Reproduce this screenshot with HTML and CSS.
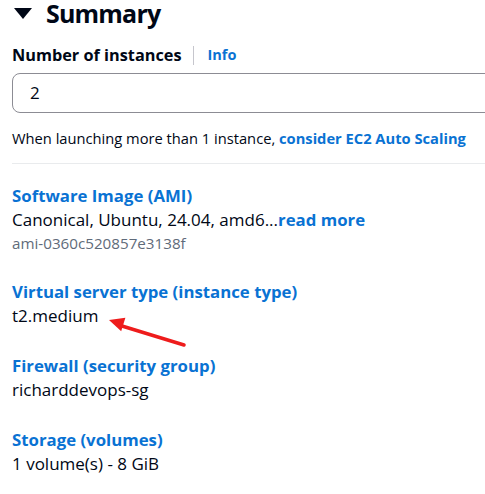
FILE: index.html
```html
<!DOCTYPE html>
<html lang="en">
<head>
  <meta charset="UTF-8">
  <title>Summary</title>
  <link rel="stylesheet" href="styles.css">
</head>
<body>
  <div class="summary">
    <!-- Header -->
    <div class="summary-header">
      <svg class="caret" width="18" height="11" viewBox="0 0 18 11">
        <polygon points="0,0 18,0 9,11" fill="#000716"/>
      </svg>
      <h2>Summary</h2>
    </div>

    <!-- Number of instances -->
    <div class="field-label">
      <span>Number of instances</span>
      <span class="info-sep"></span>
      <a class="info">Info</a>
    </div>
    <div class="input-box">2</div>
    <p class="hint">When launching more than 1 instance, <a class="link">consider EC2 Auto Scaling</a></p>

    <hr class="divider">

    <!-- Details -->
    <div class="detail">
      <a class="detail-label">Software Image (AMI)</a>
      <div class="detail-value">Canonical, Ubuntu, 24.04, amd6...<a class="link">read more</a></div>
      <div class="detail-sub">ami-0360c520857e3138f</div>
    </div>

    <div class="detail">
      <a class="detail-label">Virtual server type (instance type)</a>
      <div class="detail-value arrow-row">
        t2.medium
        <svg class="arrow" width="90" height="34" viewBox="0 0 90 34">
          <line x1="76" y1="28" x2="14" y2="9" stroke="#ee1c1c" stroke-width="3.5" stroke-linecap="round"/>
          <polygon points="1,3 17.4,0.8 13.2,14.2" fill="#ee1c1c"/>
        </svg>
      </div>
    </div>

    <div class="detail">
      <a class="detail-label">Firewall (security group)</a>
      <div class="detail-value">richarddevops-sg</div>
    </div>

    <div class="detail">
      <a class="detail-label">Storage (volumes)</a>
      <div class="detail-value">1 volume(s) - 8 GiB</div>
    </div>
  </div>
</body>
</html>
```

FILE: styles.css
```css
/* General */
body {
  margin: 0;
  font-family: 'Open Sans', 'Noto Sans', sans-serif;
  color: #000716;
  background: #fff;
  overflow: hidden;
}

.summary {
  padding-left: 12px;
}

a {
  color: #0972d3;
  font-weight: 700;
  text-decoration: none;
}

/* Header */
.summary-header {
  display: flex;
  align-items: center;
  height: 26px;
}

.caret {
  margin: 1px 14px 0 2px;
}

.summary-header h2 {
  margin: 0;
  font-size: 25px;
  line-height: 26px;
  letter-spacing: -0.8px;
  font-weight: 700;
}

/* Number of instances */
.field-label {
  display: flex;
  align-items: center;
  margin-top: 18px;
  font-size: 16.3px;
  font-weight: 700;
  line-height: 22px;
}

.info-sep {
  width: 1px;
  height: 19px;
  background: #c6c6cd;
  margin: 0 14px 0 11px;
}

.info {
  font-size: 14.5px;
}

.input-box {
  margin-top: 7px;
  height: 38px;
  margin-right: -20px;
  border: 1px solid #8c8c94;
  border-radius: 8px;
  padding-left: 17px;
  font-size: 17px;
  line-height: 38px;
}

.hint {
  margin: 15px 0 0;
  font-size: 14.7px;
  line-height: 20px;
}

.divider {
  border: none;
  border-top: 1px solid #e9ebed;
  margin: 15px 0 0;
}

/* Details */
.detail {
  margin-top: 26px;
}

.divider + .detail {
  margin-top: 20px;
}

.detail-label {
  display: block;
  font-size: 16.8px;
  line-height: 24px;
}

.detail-value {
  font-size: 17px;
  line-height: 24px;
}

.detail-value .link {
  font-size: 16.8px;
}

.detail-sub {
  font-size: 15.2px;
  line-height: 22px;
  color: #5f6b7a;
}

.arrow-row {
  position: relative;
}

.arrow {
  position: absolute;
  left: 96px;
  top: 13px;
}
```
